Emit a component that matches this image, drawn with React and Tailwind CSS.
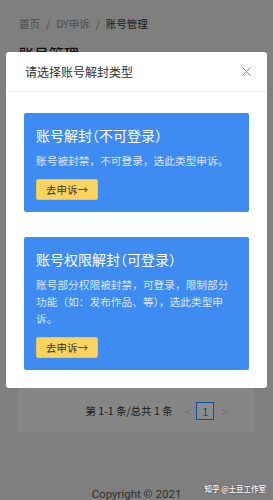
import React from 'react';

const cards = [
  {
    title: '账号解封（不可登录）',
    desc: '账号被封禁，不可登录，选此类型申诉。',
  },
  {
    title: '账号权限解封（可登录）',
    desc: '账号部分权限被封禁，可登录，限制部分功能（如：发布作品、等），选此类型申诉。',
  },
];

const AppealCard = ({ title, desc, className = '' }) => (
  <div className={`rounded-[2px] bg-[#3e8cf2] px-[12px] pt-[12px] pb-[12px] ${className}`}>
    <h3 className="text-[14px] leading-[20px] text-white [font-feature-settings:'halt']">{title}</h3>
    <p className="mt-[7px] text-[10.7px] leading-[17px] text-[#d9e8fd]">{desc}</p>
    <button className="mt-[10px] flex h-[21px] items-center rounded-[2px] border border-[#e9c24f] bg-[#fcd35f] px-[9px] text-[10.5px] text-[#333]">
      去申诉→
    </button>
  </div>
);

const App = () => {
  return (
    <div className="relative h-[500px] w-full overflow-hidden bg-[#e8e8e8] font-['Noto_Sans_CJK_SC','Noto_Sans',sans-serif]">
      {/* Page */}
      <div className="px-[19px] pt-[17px]">
        <div className="flex items-center gap-[6px] text-[10.5px] leading-[14px] text-[#8c8c8c]">
          <span>首页</span>
          <span>/</span>
          <span>DY申诉</span>
          <span>/</span>
          <span className="text-[#333]">账号管理</span>
        </div>
        <h1 className="mt-[13px] text-[15px] leading-[20px] font-medium text-[#222]">账号管理</h1>
      </div>

      <div className="ml-[18px] mr-[19px] mt-[6px] flex h-[362px] flex-col justify-end bg-[#f5f5f5] pb-[12px] pr-[26px]">
        <div className="flex items-center justify-end text-[10.5px] text-[#333]">
          <span>第 1-1 条/总共 1 条</span>
          <span className="ml-[12px] text-[12px] text-[#c8c8c8]">&lt;</span>
          <span className="ml-[5px] flex h-[18px] w-[18px] items-center justify-center border border-[#1890ff] bg-white text-[11px] text-[#1890ff]">
            1
          </span>
          <span className="ml-[7px] text-[12px] text-[#c8c8c8]">&gt;</span>
        </div>
      </div>

      <p className="mt-[54px] text-center text-[11.5px] leading-[16px] text-[#555] font-['Roboto',sans-serif]">
        Copyright © 2021
      </p>

      {/* Mask */}
      <div className="absolute inset-0 bg-black/45" />

      {/* Modal */}
      <div className="absolute left-[6px] top-[52px] w-[261px] rounded-[3px] bg-white">
        <div className="flex h-[40px] items-center justify-between border-b border-[#f0f0f0] pl-[19px] pr-[16px]">
          <span className="text-[12px] text-[#333]">请选择账号解封类型</span>
          <svg width="9" height="9" viewBox="0 0 9 9" fill="none" stroke="#8c8c8c" strokeWidth="1">
            <path d="M0.5 0.5L8.5 8.5M8.5 0.5L0.5 8.5" />
          </svg>
        </div>
        <div className="px-[18px] pt-[21px] pb-[18px]">
          {cards.map((c, i) => (
            <AppealCard key={c.title} {...c} className={i > 0 ? 'mt-[25px]' : ''} />
          ))}
        </div>
      </div>

      {/* Watermark */}
      <div className="absolute right-[7px] bottom-[6px] text-[7.5px] font-medium text-white [text-shadow:0_0_2px_rgba(0,0,0,0.5)]">
        知乎 @土豆工作室
      </div>
    </div>
  );
};

export default App;
